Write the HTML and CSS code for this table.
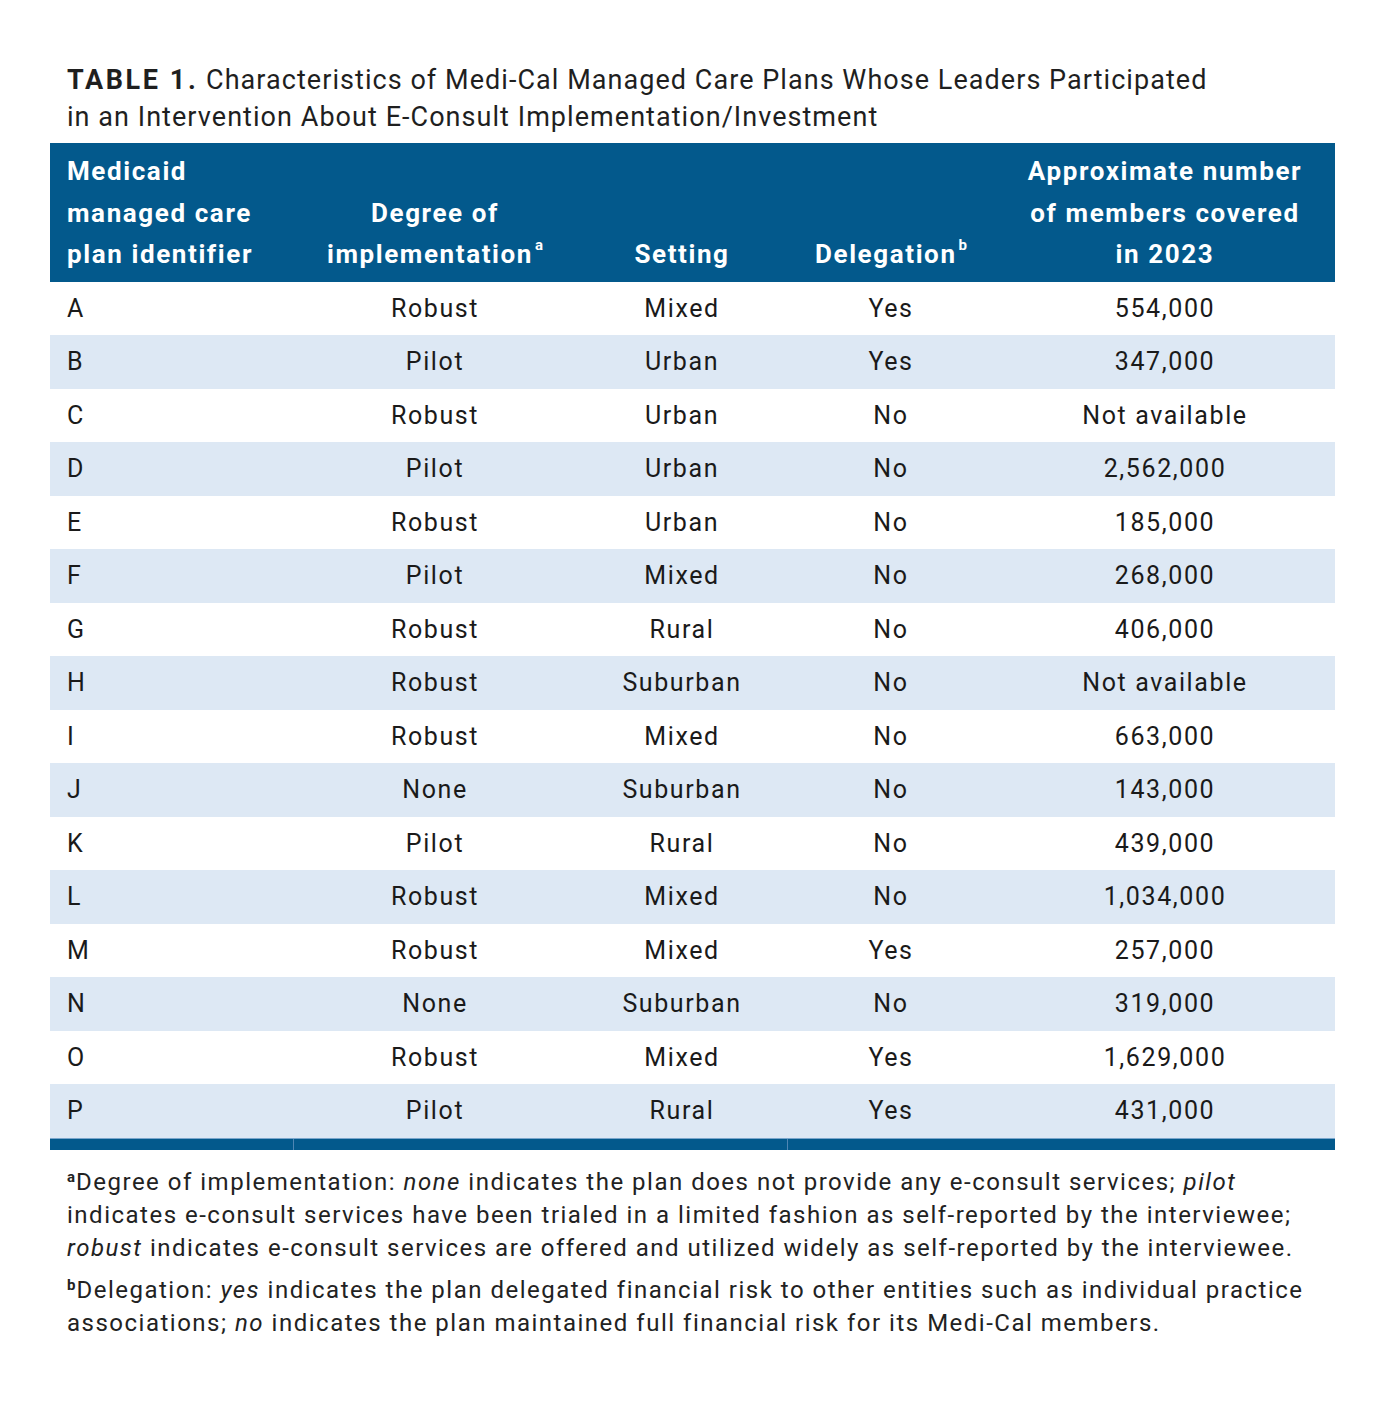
FILE: index.html
```html
<!DOCTYPE html>
<html lang="en">
<head>
<meta charset="utf-8">
<title>Table 1</title>
<link rel="stylesheet" href="styles.css">
</head>
<body>
<div class="page">
  <h1 class="title"><span class="label">TABLE 1.</span> Characteristics of Medi-Cal Managed Care Plans Whose Leaders Participated<br>in an Intervention About E-Consult Implementation/Investment</h1>
  <table class="data">
    <colgroup>
      <col class="c1"><col class="c2"><col class="c3"><col class="c4"><col class="c5">
    </colgroup>
    <thead>
      <tr>
        <th class="left">Medicaid<br>managed care<br>plan identifier</th>
        <th>Degree of<br>implementation<sup>a</sup></th>
        <th>Setting</th>
        <th>Delegation<sup>b</sup></th>
        <th>Approximate number<br>of members covered<br>in 2023</th>
      </tr>
    </thead>
    <tbody>
      <tr><td class="left">A</td><td>Robust</td><td>Mixed</td><td>Yes</td><td>554,000</td></tr>
      <tr class="alt"><td class="left">B</td><td>Pilot</td><td>Urban</td><td>Yes</td><td>347,000</td></tr>
      <tr><td class="left">C</td><td>Robust</td><td>Urban</td><td>No</td><td>Not available</td></tr>
      <tr class="alt"><td class="left">D</td><td>Pilot</td><td>Urban</td><td>No</td><td>2,562,000</td></tr>
      <tr><td class="left">E</td><td>Robust</td><td>Urban</td><td>No</td><td>185,000</td></tr>
      <tr class="alt"><td class="left">F</td><td>Pilot</td><td>Mixed</td><td>No</td><td>268,000</td></tr>
      <tr><td class="left">G</td><td>Robust</td><td>Rural</td><td>No</td><td>406,000</td></tr>
      <tr class="alt"><td class="left">H</td><td>Robust</td><td>Suburban</td><td>No</td><td>Not available</td></tr>
      <tr><td class="left">I</td><td>Robust</td><td>Mixed</td><td>No</td><td>663,000</td></tr>
      <tr class="alt"><td class="left">J</td><td>None</td><td>Suburban</td><td>No</td><td>143,000</td></tr>
      <tr><td class="left">K</td><td>Pilot</td><td>Rural</td><td>No</td><td>439,000</td></tr>
      <tr class="alt"><td class="left">L</td><td>Robust</td><td>Mixed</td><td>No</td><td>1,034,000</td></tr>
      <tr><td class="left">M</td><td>Robust</td><td>Mixed</td><td>Yes</td><td>257,000</td></tr>
      <tr class="alt"><td class="left">N</td><td>None</td><td>Suburban</td><td>No</td><td>319,000</td></tr>
      <tr><td class="left">O</td><td>Robust</td><td>Mixed</td><td>Yes</td><td>1,629,000</td></tr>
      <tr class="alt"><td class="left">P</td><td>Pilot</td><td>Rural</td><td>Yes</td><td>431,000</td></tr>
    </tbody>
    <tfoot>
      <tr class="bar"><td></td><td class="div"></td><td></td><td class="div"></td><td></td></tr>
    </tfoot>
  </table>
  <div class="notes">
    <p><sup>a</sup>Degree of implementation: <em>none</em> indicates the plan does not provide any e-consult services; <em>pilot</em><br>indicates e-consult services have been trialed in a limited fashion as self-reported by the interviewee;<br><em>robust</em> indicates e-consult services are offered and utilized widely as self-reported by the interviewee.</p>
    <p><sup>b</sup>Delegation: <em>yes</em> indicates the plan delegated financial risk to other entities such as individual practice<br>associations; <em>no</em> indicates the plan maintained full financial risk for its Medi-Cal members.</p>
  </div>
</div>
</body>
</html>
```
FILE: styles.css
```css
html, body {
  margin: 0;
  padding: 0;
  background: #ffffff;
}
body {
  font-family: Roboto, "Liberation Sans", sans-serif;
  color: #1a1a1a;
}
.page {
  width: 1285px;
  padding: 62px 0 0 50px;
}
.title {
  margin: 0 0 7px 0;
  padding-left: 17px;
  font-size: 27px;
  line-height: 37px;
  font-weight: 400;
  letter-spacing: 1.05px;
  color: #1f1f1f;
  white-space: nowrap;
}
.title .label {
  font-weight: 700;
  letter-spacing: 2.6px;
}
.data {
  width: 1285px;
  border-collapse: collapse;
  table-layout: fixed;
}
.c1 { width: 243px; }
.c2 { width: 284px; }
.c3 { width: 210px; }
.c4 { width: 208px; }
.c5 { width: 340px; }
.data th {
  background: #03598c;
  color: #ffffff;
  font-size: 26px;
  font-weight: 700;
  line-height: 41.5px;
  letter-spacing: 1.6px;
  vertical-align: bottom;
  text-align: center;
  padding: 8px 0 6px 0;
  white-space: nowrap;
}
.data th sup,
.notes sup {
  font-size: 15px;
  font-weight: 700;
  vertical-align: top;
  line-height: 1;
  position: relative;
  top: 4px;
  margin-left: 2px;
  letter-spacing: 0;
}
.notes sup {
  top: 4px;
  margin-left: 0;
  margin-right: 1px;
}
.data .left {
  text-align: left;
  padding-left: 17px;
}
.data td {
  height: 53.5px;
  padding: 0;
  font-size: 25px;
  letter-spacing: 1.6px;
  text-align: center;
  vertical-align: middle;
  color: #1a1a1a;
}
.data tr.alt td {
  background: #dde8f4;
}
.data tr.bar td {
  height: 11px;
  background: #03598c;
  border-top: 1px solid #7aa6cc;
}
.data tr.bar td.div {
  border-left: 1px solid #4f86b4;
}
.notes {
  padding: 16px 0 0 17px;
  font-size: 24px;
  line-height: 33px;
  letter-spacing: 1.5px;
  color: #222222;
  white-space: nowrap;
}
.notes p {
  margin: 0 0 9px 0;
}
.notes em {
  font-style: italic;
}
```
